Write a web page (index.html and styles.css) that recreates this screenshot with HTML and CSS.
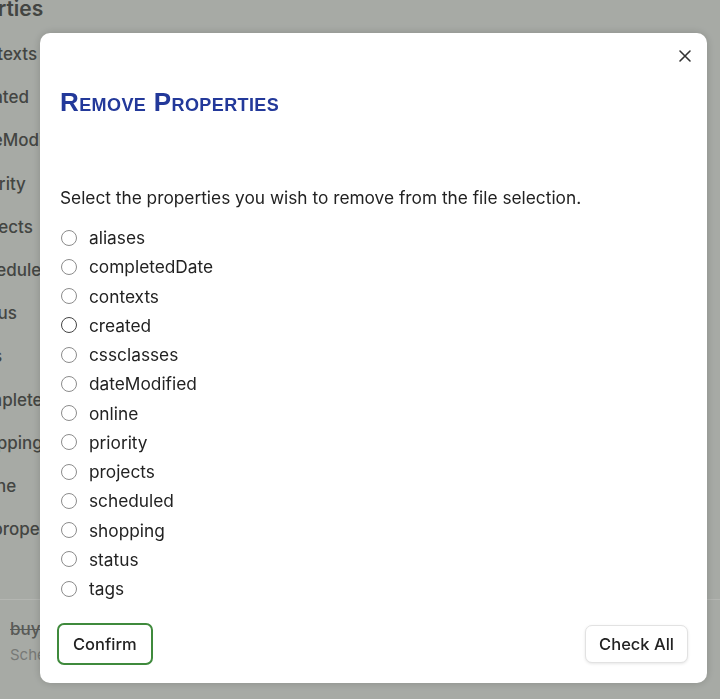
FILE: index.html
```html
<!DOCTYPE html>
<html lang="en">
<head>
    <meta charset="UTF-8">
    <meta name="viewport" content="width=device-width, initial-scale=1.0">
    <title>Remove Properties</title>
    <link rel="stylesheet" href="styles.css">
</head>
<body>
    <!-- страница под модальным окном -->
    <div class="page">
        <h1 class="page-title">Properties</h1>
        <ul class="prop-list">
            <li>contexts</li>
            <li>created</li>
            <li>dateModified</li>
            <li>priority</li>
            <li>projects</li>
            <li>scheduled</li>
            <li>status</li>
            <li>tags</li>
            <li>completed</li>
            <li>shopping</li>
            <li>online</li>
            <li>All properties</li>
        </ul>
        <div class="task">
            <div class="task-name">buy milk</div>
            <div class="task-meta">Scheduled</div>
        </div>
    </div>

    <div class="modal-background"></div>

    <div class="modal">
        <button class="close-btn" aria-label="Close">
            <svg width="14" height="14" viewBox="0 0 14 14">
                <path d="M2 2 L12 12 M12 2 L2 12" stroke="#333" stroke-width="1.6" stroke-linecap="round"/>
            </svg>
        </button>
        <h2 class="modal-title">Remove Properties</h2>
        <p class="modal-text">Select the properties you wish to remove from the file selection.</p>
        <div class="options">
            <label class="option"><input type="radio" name="p1"><span>aliases</span></label>
            <label class="option"><input type="radio" name="p2"><span>completedDate</span></label>
            <label class="option"><input type="radio" name="p3"><span>contexts</span></label>
            <label class="option"><input type="radio" name="p4" class="focused"><span>created</span></label>
            <label class="option"><input type="radio" name="p5"><span>cssclasses</span></label>
            <label class="option"><input type="radio" name="p6"><span>dateModified</span></label>
            <label class="option"><input type="radio" name="p7"><span>online</span></label>
            <label class="option"><input type="radio" name="p8"><span>priority</span></label>
            <label class="option"><input type="radio" name="p9"><span>projects</span></label>
            <label class="option"><input type="radio" name="p10"><span>scheduled</span></label>
            <label class="option"><input type="radio" name="p11"><span>shopping</span></label>
            <label class="option"><input type="radio" name="p12"><span>status</span></label>
            <label class="option"><input type="radio" name="p13"><span>tags</span></label>
        </div>
        <div class="modal-buttons">
            <button class="btn btn-confirm">Confirm</button>
            <button class="btn btn-check">Check All</button>
        </div>
    </div>
</body>
</html>
```

FILE: styles.css
```css
body {
    margin: 0;
    height: 699px;
    overflow: hidden;
    background-color: #abaea9; /* серый фон под затемнением */
    font-family: Inter, "Noto Sans", sans-serif;
    color: #454744;
}
.page-title {
    margin: -6px 0 0 -62px;
    font-size: 21px;
    font-weight: 600;
    line-height: 30px;
}
.prop-list {
    list-style: none;
    margin: 9px 0 0 -33px;
    padding: 0;
}
.prop-list li {
    font-size: 17px;
    font-weight: 500;
    line-height: 43.2px;
}
.task {
    margin-top: 48px;
    border-top: 1px solid #b8bab6;
    padding: 16px 0 0 10px;
}
.task-name {
    font-size: 17px;
    font-weight: 500;
    text-decoration: line-through;
    color: #5a5c59;
    line-height: 26px;
}
.task-meta {
    font-size: 15px;
    color: #7a7c79;
    line-height: 26px;
}
.modal-background {
    position: fixed;
    inset: 0;
    background-color: rgba(0, 0, 0, 0.02);
}
.modal {
    position: fixed;
    top: 33px;
    left: 40px;
    width: 667px;
    height: 650px;
    box-sizing: border-box;
    padding: 54px 20px 18px 20px;
    background-color: #fff;
    border-radius: 10px;
    box-shadow: 0 0 10px rgba(0, 0, 0, 0.18);
    display: flex;
    flex-direction: column;
    color: #222;
}
.close-btn {
    position: absolute;
    top: 16px;
    right: 15px;
    width: 14px;
    height: 14px;
    padding: 0;
    border: none;
    background: none;
    display: flex;
}
.modal-title {
    margin: 0;
    font-family: "Liberation Sans", Arial, sans-serif;
    font-size: 26px;
    font-weight: 700;
    font-variant: small-caps;
    letter-spacing: 0.4px;
    color: #23399a;
    line-height: 30px;
}
.modal-text {
    margin: 69px 0 0 0;
    font-size: 17.3px;
    line-height: 24px;
}
.options {
    display: flex;
    flex-direction: column;
    margin-top: 13px;
}
.option {
    display: flex;
    align-items: center;
    gap: 12px;
    height: 29.25px;
    font-size: 17.3px;
}
.option input {
    appearance: none;
    margin: 0 0 0 1px;
    width: 16px;
    height: 16px;
    border: 1px solid #8c8c8c;
    border-radius: 50%;
    background: #fff;
}
.option input.focused {
    border-color: #444;
}
.modal-buttons {
    margin-top: auto;
    display: flex;
    justify-content: space-between;
    align-items: center;
}
.btn {
    font-family: Inter, "Noto Sans", sans-serif;
    font-size: 16.5px;
    font-weight: 500;
    color: #222;
    background: #fff;
    border-radius: 7px;
    cursor: pointer;
}
.btn-confirm {
    margin-left: -3px;
    height: 42px;
    padding: 0 14px;
    border: 2px solid #3f8a3c;
}
.btn-check {
    margin-right: -1px;
    height: 38px;
    padding: 0 13px;
    border: 1px solid #e2e2e2;
    box-shadow: 0 1px 3px rgba(0, 0, 0, 0.1);
}
```
